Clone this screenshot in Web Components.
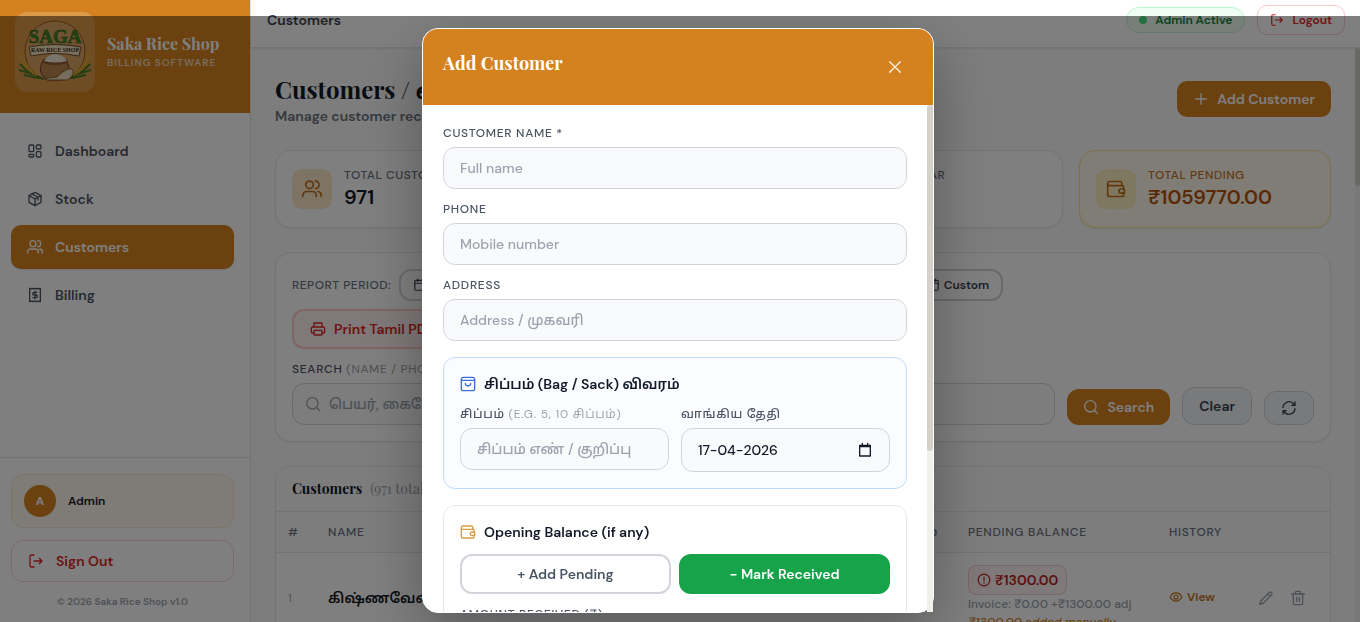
<!DOCTYPE html>
<html lang="en">
<head>
<meta charset="UTF-8">
<meta name="viewport" content="width=device-width, initial-scale=1.0">
<title>Saka Rice Shop</title>
<style>
  :root {
    --brand: #d4821f;
    --serif: "Playfair Display", "Liberation Serif", "Noto Sans Tamil", serif;
    --sans: "DM Sans", Inter, "Noto Sans Tamil", "Noto Sans", sans-serif;
  }
  html, body { height: 100%; }
  body {
    margin: 0;
    overflow: hidden;
    font-family: var(--sans);
    font-size: 14px;
    line-height: 20px;
    color: #111827;
  }
</style>
</head>
<body>
<shop-app></shop-app>

<script>
const ICONS = {
  dashboard: '<rect x="3" y="3" width="7" height="10" rx="1.5"/><rect x="14" y="3" width="7" height="6" rx="1.5"/><rect x="3" y="17" width="7" height="4" rx="1"/><rect x="14" y="13" width="7" height="8" rx="1.5"/>',
  box: '<path d="M12 2 21 7v10l-9 5-9-5V7z"/><path d="m3 7 9 5 9-5M12 12v10M7.500 4.500l9 5v4"/>',
  users: '<circle cx="9" cy="7" r="4.500"/><path d="M1 21v-1.500a4.500 4.500 0 0 1 4.500-4.500h7a4.500 4.500 0 0 1 4.500 4.500V21M16 2.500a4.500 4.500 0 0 1 0 9M19 15a4.500 4.500 0 0 1 4 4.500V21"/>',
  bill: '<path d="M4 2h1.500l1.500 1 1.700-1 1.600 1L12 2l1.700 1 1.600-1L17 3l1.500-1H20v20h-1.500L17 21l-1.700 1-1.600-1-1.700 1-1.700-1-1.600 1L7 21l-1.500 1H4z"/><path d="M15 8h-4.500a2 2 0 0 0 0 4h3a2 2 0 0 1 0 4H9M12 6.500v11"/>',
  logout: '<path d="M9 3H5a2 2 0 0 0-2 2v14a2 2 0 0 0 2 2h4M9 12h12M17 8l4 4-4 4"/>',
  plus: '<path d="M12 4v16M4 12h16"/>',
  close: '<path d="M4 4l16 16M20 4 4 20"/>',
  wallet: '<path d="M19 8V5a2 2 0 0 0-2-2H4.500a2.500 2.500 0 0 0 0 5H20a1 1 0 0 1 1 1v3M2 5.500V19a2 2 0 0 0 2 2h16a1 1 0 0 0 1-1v-3"/><path d="M22 12h-4a2.500 2.500 0 0 0 0 5h4z"/>',
  calendar: '<rect x="3" y="4" width="18" height="17" rx="2"/><path d="M8 2v4M16 2v4M3 9h18"/>',
  print: '<path d="M6 9V3h12v6M6 18H4a2 2 0 0 1-2-2v-5a2 2 0 0 1 2-2h16a2 2 0 0 1 2 2v5a2 2 0 0 1-2 2h-2"/><rect x="6" y="14" width="12" height="7" rx="1"/>',
  search: '<circle cx="11" cy="11" r="8.500"/><path d="m17.500 17.500 4.500 4.500"/>',
  refresh: '<path d="M3 11a9 9 0 0 1 16-5l2 2M21 3v5h-5M21 13a9 9 0 0 1-16 5l-2-2M3 21v-5h5"/>',
  alert: '<circle cx="12" cy="12" r="10"/><path d="M12 7v6M12 16v1"/>',
  eye: '<path d="M2 12c2-4.500 6-7 10-7s8 2.500 10 7c-2 4.500-6 7-10 7s-8-2.500-10-7z"/><circle cx="12" cy="12" r="3.500"/>',
  pencil: '<path d="M17 3.500a2.500 2.500 0 0 1 3.500 3.500L8 19.500 2.500 21.500l2-5.500zM14.500 6l3.500 3.500"/>',
  trash: '<path d="M2.500 6h19M8 6V4a2 2 0 0 1 2-2h4a2 2 0 0 1 2 2v2M5 6v14a2 2 0 0 0 2 2h10a2 2 0 0 0 2-2V6M10 11v6M14 11v6"/>',
  bag: '<rect x="2" y="2" width="20" height="20" rx="3"/><path d="M2 6.500h20M8 11a4 4 0 0 0 8 0"/>',
  datepick: '<path d="M4 5h16v16H4zM4 7h16M8 2v3M16 2v3"/>',
};

class UiIcon extends HTMLElement {
  constructor() {
    super();
    this.attachShadow({ mode: "open" });
  }

  connectedCallback() {
    const size = this.getAttribute("size") || 16;
    this.shadowRoot.innerHTML = `
      <style>
        :host { display: inline-flex; flex: none; }
        svg { display: block; fill: none; stroke: currentColor; stroke-linecap: round; stroke-linejoin: round; }
      </style>
      <svg width="${size}" height="${size}" viewBox="0 0 24 24" stroke-width="${this.getAttribute("stroke") || 2}" aria-hidden="true">${ICONS[this.getAttribute("name")]}</svg>
    `;
  }
}
customElements.define("ui-icon", UiIcon);

class ShopLogo extends HTMLElement {
  constructor() {
    super();
    this.attachShadow({ mode: "open" }).innerHTML = `
      <style>
        :host { display: block; flex: none; width: 80px; height: 80px; border-radius: 12px; background: rgba(255, 255, 255, 0.2); }
        svg { display: block; }
        text { font-family: "Liberation Serif", serif; font-weight: 700; }
      </style>
      <svg width="80" height="80" viewBox="0 0 80 80" role="img" aria-label="Saga raw rice shop">
        <circle cx="40" cy="39" r="30" fill="#dda565" stroke="#9a5a22" stroke-width="1"/>
        <g fill="none" stroke="#4c7a27" stroke-width="2">
          <path d="M5 52q10 11 24 15M75 52q-10 11-24 15M4 58q10 3 16 5M76 58q-10 3-16 5M9 63l14 3M71 63l-14 3"/>
        </g>
        <g fill="none" stroke="#e0a92e" stroke-width="4" stroke-dasharray="2 1">
          <path d="M6 40q1 15 17 23M74 40q-1 15-17 23"/>
        </g>
        <path d="M27 50q-5 12 5 17h17q9-5 3-17z" fill="#bd8550" stroke="#6d4020"/>
        <ellipse cx="40" cy="49" rx="13" ry="4" fill="#8a5a30"/>
        <path d="M29 49q3-5 7-6 4-3 8 0 5 1 8 6-11 3-23 0z" fill="#f4ead8"/>
        <path d="M42 65q10-10 15-8 4 4-4 11H32q-4-2 10-3z" fill="#ecd9bb" stroke="#8a5a30"/>
        <path d="M14 35q26-5 52 0l-2 9q-24-5-48 0z" fill="#f3e2bf" stroke="#6d4a25" stroke-width="1"/>
        <text x="40" y="31" text-anchor="middle" font-size="19" fill="#3f8a1f" stroke="#2a5c16" stroke-width="0.500">SAGA</text>
        <text x="40" y="40" text-anchor="middle" font-size="6" fill="#3b2a18">RAW RICE SHOP</text>
      </svg>
    `;
  }
}
customElements.define("shop-logo", ShopLogo);

class NavItem extends HTMLElement {
  constructor() {
    super();
    this.attachShadow({ mode: "open" });
  }

  connectedCallback() {
    this.shadowRoot.innerHTML = `
      <style>
        :host { display: block; }
        a {
          display: flex; align-items: center; gap: 12px; height: 44px; padding: 0 16px;
          border-radius: 10px; color: #4b5563; font-weight: 600; text-decoration: none;
        }
        :host([active]) a { background: var(--brand); color: #fff; box-shadow: 0 1px 2px rgba(0, 0, 0, 0.1); }
      </style>
      <a href="#"><ui-icon name="${this.getAttribute("icon")}"></ui-icon><slot></slot></a>
    `;
  }
}
customElements.define("nav-item", NavItem);

class AppSidebar extends HTMLElement {
  constructor() {
    super();
    this.attachShadow({ mode: "open" }).innerHTML = `
      <style>
        :host { display: flex; flex-direction: column; flex: none; box-sizing: border-box; width: 251px; background: #fff; border-right: 1px solid #e5e7eb; }
        header { display: flex; align-items: center; gap: 12px; padding: 12px 15px 21px; background: var(--brand); color: #fff; }
        h2 { margin: 0; font: 700 16px/22px var(--serif); }
        header p { margin: 0; font-size: 10px; line-height: 16px; font-weight: 600; letter-spacing: 1px; opacity: 0.7; }
        nav { flex: 1; display: flex; flex-direction: column; gap: 4px; padding: 16px 16px 0 11px; }
        footer { display: flex; flex-direction: column; gap: 12px; padding: 16px 16px 12px 11px; border-top: 1px solid #e5e7eb; }
        .user { display: flex; align-items: center; gap: 12px; padding: 10px 12px; border: 1px solid #fbe9cf; border-radius: 12px; background: #fef7ec; font-size: 12px; font-weight: 600; }
        .avatar { display: grid; place-items: center; width: 32px; height: 32px; border-radius: 50%; background: var(--brand); color: #fff; font-size: 12px; font-weight: 700; }
        button { display: flex; align-items: center; gap: 12px; height: 42px; padding: 0 16px; border: 1px solid #fbd5d9; border-radius: 12px; background: #fff; color: #dc2626; font: 600 14px/20px var(--sans); }
        small { font-size: 10px; line-height: 16px; font-weight: 600; text-align: center; color: #9ca3af; }
      </style>
      <header>
        <shop-logo></shop-logo>
        <div>
          <h2>Saka Rice Shop</h2>
          <p>BILLING SOFTWARE</p>
        </div>
      </header>
      <nav>
        <nav-item icon="dashboard">Dashboard</nav-item>
        <nav-item icon="box">Stock</nav-item>
        <nav-item icon="users" active>Customers</nav-item>
        <nav-item icon="bill">Billing</nav-item>
      </nav>
      <footer>
        <div class="user"><span class="avatar">A</span>Admin</div>
        <button type="button"><ui-icon name="logout"></ui-icon>Sign Out</button>
        <small>© 2026 Saka Rice Shop v1.0</small>
      </footer>
    `;
  }
}
customElements.define("app-sidebar", AppSidebar);

class TopBar extends HTMLElement {
  constructor() {
    super();
    this.attachShadow({ mode: "open" }).innerHTML = `
      <style>
        :host { display: flex; align-items: center; gap: 12px; padding: 5px 15px 12px 16px; background: #fff; border-bottom: 1px solid #e5e7eb; box-shadow: 0 1px 2px rgba(0, 0, 0, 0.08); color: #374151; font-weight: 600; }
        .title { flex: 1; }
        .status { display: flex; align-items: center; gap: 8px; height: 24px; padding: 0 12px; border: 1px solid #bbf7d0; border-radius: 13px; background: #f0fdf4; color: #15803d; font-size: 12px; font-weight: 600; }
        .dot { width: 8px; height: 8px; border-radius: 50%; background: #4ade80; }
        button { display: flex; align-items: center; gap: 8px; height: 30px; padding: 0 12px; border: 1px solid #fecaca; border-radius: 10px; background: #fff; color: #dc2626; font: 600 12px/16px var(--sans); }
      </style>
      <span class="title">Customers</span>
      <span class="status"><i class="dot"></i>Admin Active</span>
      <button type="button"><ui-icon name="logout" size="14"></ui-icon>Logout</button>
    `;
  }
}
customElements.define("top-bar", TopBar);

class StatCard extends HTMLElement {
  constructor() {
    super();
    this.attachShadow({ mode: "open" });
  }

  connectedCallback() {
    this.shadowRoot.innerHTML = `
      <style>
        :host { display: flex; align-items: center; gap: 12px; padding: 16px; border: 1px solid #e5e7eb; border-radius: 16px; background: #fff; box-shadow: 0 1px 2px rgba(0, 0, 0, 0.06); }
        .icon { display: grid; place-items: center; flex: none; width: 40px; height: 40px; border-radius: 10px; background: #fbe8c9; color: #c2701a; }
        p { margin: 0; color: #6b7280; font-size: 12px; line-height: 16px; font-weight: 500; letter-spacing: 0.5px; white-space: nowrap; }
        strong { display: block; font-size: 20px; line-height: 28px; font-weight: 600; }
        :host([warn]) { background: #fffaeb; border-color: #fde08a; }
        :host([warn]) .icon { background: #fef0c0; }
        :host([warn]) p { color: #c8741b; }
        :host([warn]) strong { color: #b45309; }
      </style>
      <span class="icon"><ui-icon name="${this.getAttribute("icon")}" size="20"></ui-icon></span>
      <div><p>${this.getAttribute("label")}</p><strong><slot></slot></strong></div>
    `;
  }
}
customElements.define("stat-card", StatCard);

class FilterPanel extends HTMLElement {
  constructor() {
    super();
    this.attachShadow({ mode: "open" }).innerHTML = `
      <style>
        :host { display: flex; flex-direction: column; padding: 16px; border: 1px solid #e5e7eb; border-radius: 16px; background: #fff; box-shadow: 0 1px 2px rgba(0, 0, 0, 0.06); }
        button { display: flex; align-items: center; gap: 8px; box-sizing: border-box; font: 600 14px/20px var(--sans); border-radius: 12px; }
        .period { display: flex; align-items: center; gap: 8px; }
        .period span { font-size: 12px; font-weight: 500; letter-spacing: 0.5px; color: #6b7280; white-space: nowrap; }
        .choices { display: flex; justify-content: space-between; flex: 0 1 604px; }
        .choices button { height: 32px; padding: 0 12px; gap: 4px; border: 2px solid #d1d5db; background: #fff; color: #374151; font-size: 12px; }
        .print { align-self: flex-start; height: 40px; margin: 8px 0 12px; padding: 0 16px; border: 2px solid #fecaca; background: #fef2f2; color: #dc2626; }
        label { margin-bottom: 6px; font-size: 12px; line-height: 16px; font-weight: 500; color: #4b5563; letter-spacing: 0.7px; }
        label span { color: #9ca3af; font-weight: 400; }
        .row { display: flex; align-items: flex-end; gap: 12px; }
        .box { display: flex; align-items: center; gap: 8px; flex: 1; box-sizing: border-box; height: 42px; padding: 0 12px; border: 1px solid #d1d5db; border-radius: 12px; background: #f8faf9; color: #9ca3af; }
        input { flex: 1; min-width: 0; padding: 0; border: 0; outline: 0; background: none; font: 500 14px/20px var(--sans); }
        input::placeholder { color: #9ca3af; }
        .go { height: 36px; padding: 0 16px; border: 0; background: var(--brand); color: #fff; }
        .clear, .reload { border: 1px solid #d1d5db; background: #f3f4f6; color: #374151; padding: 0 16px; }
        .clear { height: 38px; }
        .reload { height: 34px; }
      </style>
      <div class="period">
        <span>REPORT PERIOD:</span>
        <div class="choices">
          <button type="button"><ui-icon name="calendar" size="14"></ui-icon>This Week</button>
          <button type="button"><ui-icon name="calendar" size="14"></ui-icon>This Month</button>
          <button type="button"><ui-icon name="calendar" size="14"></ui-icon>Custom</button>
        </div>
      </div>
      <button class="print" type="button"><ui-icon name="print"></ui-icon>Print Tamil PDF</button>
      <label for="q">SEARCH <span>(NAME / PHONE)</span></label>
      <div class="row">
        <div class="box"><ui-icon name="search"></ui-icon><input id="q" type="text" placeholder="பெயர், கைபேசி"></div>
        <button class="go" type="button"><ui-icon name="search"></ui-icon>Search</button>
        <button class="clear" type="button">Clear</button>
        <button class="reload" type="button" aria-label="Refresh"><ui-icon name="refresh"></ui-icon></button>
      </div>
    `;
  }
}
customElements.define("filter-panel", FilterPanel);

class CustomerTable extends HTMLElement {
  constructor() {
    super();
    this.attachShadow({ mode: "open" }).innerHTML = `
      <style>
        :host { display: block; border: 1px solid #e5e7eb; border-radius: 16px; background: #fff; overflow: hidden; }
        .head { display: flex; align-items: center; gap: 8px; height: 44px; padding: 0 16px; background: #f8faf9; border-bottom: 1px solid #e5e7eb; font-family: var(--serif); }
        h3 { margin: 0; font-size: 14px; font-weight: 700; }
        .head span { color: #9ca3af; }
        table { width: 100%; border-collapse: collapse; table-layout: fixed; }
        th { height: 40px; padding: 0 12px; background: #f8faf9; border-bottom: 1px solid #e5e7eb; color: #6b7280; font-size: 12px; font-weight: 500; letter-spacing: 0.7px; text-align: left; white-space: nowrap; }
        th.sack { text-align: right; padding-right: 18px; }
        td { padding: 12px; white-space: nowrap; }
        td.num { color: #9ca3af; font-size: 12px; }
        td.name { font-weight: 600; }
        .due { display: inline-flex; align-items: center; gap: 4px; height: 28px; padding: 0 8px; border: 1px solid #fecaca; border-radius: 8px; background: #fef2f2; color: #b91c1c; font-weight: 600; vertical-align: top; }
        .note { font-size: 12px; line-height: 18px; font-weight: 500; color: #9ca3af; }
        .note em { color: #d4821f; }
        .view { display: inline-flex; align-items: center; gap: 4px; color: #c2701a; font-size: 12px; font-weight: 600; text-decoration: none; }
        .tools { display: flex; gap: 16px; }
        .tools button { display: flex; padding: 0; border: 0; background: none; color: #9ca3af; }
      </style>
      <div class="head"><h3>Customers</h3><span>(971 total)</span></div>
      <table>
        <colgroup><col style="width:40px"><col style="width:240px"><col><col style="width:201px"><col style="width:89px"><col style="width:84px"></colgroup>
        <thead>
          <tr><th>#</th><th>NAME</th><th class="sack">சிப்பம்</th><th>PENDING BALANCE</th><th>HISTORY</th><th></th></tr>
        </thead>
        <tbody>
          <tr>
            <td class="num">1</td>
            <td class="name">கிஷ்ணவேணி</td>
            <td></td>
            <td>
              <span class="due"><ui-icon name="alert" size="14"></ui-icon>₹1300.00</span>
              <div class="note">Invoice: ₹0.00 +₹1300.00 adj<br><em>₹1300.00 added manually</em></div>
            </td>
            <td><a class="view" href="#"><ui-icon name="eye" size="14"></ui-icon>View</a></td>
            <td>
              <div class="tools">
                <button type="button" aria-label="Edit"><ui-icon name="pencil"></ui-icon></button>
                <button type="button" aria-label="Delete"><ui-icon name="trash"></ui-icon></button>
              </div>
            </td>
          </tr>
        </tbody>
      </table>
    `;
  }
}
customElements.define("customer-table", CustomerTable);

class CustomersPage extends HTMLElement {
  constructor() {
    super();
    this.attachShadow({ mode: "open" }).innerHTML = `
      <style>
        :host { display: flex; flex: 1; min-height: 0; background: #f8faf9; }
        main { flex: 1; min-width: 0; display: flex; flex-direction: column; gap: 24px; padding: 24px 24px 0; overflow: hidden; }
        main > * { flex: none; }
        .top { display: flex; align-items: center; justify-content: space-between; }
        h1 { margin: 0; font: 700 24px/34px var(--serif); }
        .top p { margin: 0; line-height: 20px; color: #6b7280; font-weight: 600; }
        .top button { display: flex; align-items: center; gap: 8px; height: 36px; padding: 0 16px; border: 0; border-radius: 10px; background: var(--brand); color: #fff; font: 600 14px/20px var(--sans); }
        .stats { display: grid; grid-template-columns: repeat(4, 1fr); gap: 16px; }
        .rail { flex: none; width: 5px; background: #f1f1ec; }
        .thumb { height: 138px; border-radius: 3px; background: #d3d1c9; }
      </style>
      <main>
        <div class="top">
          <div>
            <h1>Customers / வாடிக்கையாளர்</h1>
            <p>Manage customer records</p>
          </div>
          <button type="button"><ui-icon name="plus"></ui-icon>Add Customer</button>
        </div>
        <div class="stats">
          <stat-card icon="users" label="TOTAL CUSTOMERS">971</stat-card>
          <stat-card icon="calendar" label="THIS MONTH">0</stat-card>
          <stat-card icon="calendar" label="LAST YEAR">0</stat-card>
          <stat-card icon="wallet" label="TOTAL PENDING" warn>₹1059770.00</stat-card>
        </div>
        <filter-panel></filter-panel>
        <customer-table></customer-table>
      </main>
      <div class="rail"><div class="thumb"></div></div>
    `;
  }
}
customElements.define("customers-page", CustomersPage);

class FormField extends HTMLElement {
  constructor() {
    super();
    this.attachShadow({ mode: "open" });
  }

  connectedCallback() {
    const isDate = this.hasAttribute("date");
    this.shadowRoot.innerHTML = `
      <style>
        :host { display: block; min-width: 0; }
        label { display: block; height: 16px; margin-bottom: 6px; font-size: 12px; line-height: 16px; font-weight: 500; color: #4b5563; letter-spacing: 0.7px; white-space: nowrap; }
        .box { display: flex; align-items: center; box-sizing: border-box; height: 42px; padding: 0 16px; border: 1px solid #d1d5db; border-radius: 12px; background: #f9fafc; }
        :host([date]) .box { height: 44px; }
        input { flex: 1; min-width: 0; padding: 0; border: 0; outline: 0; background: none; color: #111827; font: 500 14px/20px var(--sans); }
        input::placeholder { color: #9ca3af; }
        ::slotted(span) { color: #9ca3af; font-weight: 400; }
      </style>
      <label for="field"><slot></slot></label>
      <div class="box">
        <input id="field" type="text" placeholder="${this.getAttribute("placeholder") || ""}" value="${this.getAttribute("value") || ""}">
        ${isDate ? '<ui-icon name="datepick"></ui-icon>' : ""}
      </div>
    `;
  }
}
customElements.define("form-field", FormField);

class CustomerDialog extends HTMLElement {
  constructor() {
    super();
    this.attachShadow({ mode: "open" }).innerHTML = `
      <style>
        :host { display: flex; flex-direction: column; box-sizing: border-box; width: 512px; max-width: 100%; border: 1px solid #fff; border-radius: 16px; background: #fff; box-shadow: 0 20px 60px rgba(0, 0, 0, 0.3); }
        header { display: flex; align-items: flex-start; justify-content: space-between; height: 76px; box-sizing: border-box; padding: 22px 30px 0 20px; border-radius: 15px 15px 0 0; background: var(--brand); color: #fff; }
        h2 { margin: 0; font: 700 18px/24px var(--serif); }
        header button { display: flex; margin-top: 8px; padding: 0; border: 0; background: none; color: #fbeeda; }
        .scroll { display: flex; flex: 1; min-height: 0; overflow: hidden; border-bottom-left-radius: 15px; }
        form { flex: 1; min-width: 0; display: flex; flex-direction: column; gap: 12px; padding: 20px 20px 0; overflow: hidden; }
        form > * { flex: none; }
        section { display: flex; flex-direction: column; gap: 12px; margin-top: 4px; padding: 16px; border: 1px solid #e5e7eb; border-radius: 12px; }
        .bag { border-color: #bfdbfe; background: #fafcff; }
        h3 { display: flex; align-items: center; gap: 8px; height: 20px; margin: 0; font-size: 14px; font-weight: 600; white-space: nowrap; }
        .bag h3 ui-icon { color: #3b6fe0; }
        .balance h3 ui-icon { color: #d99a3c; }
        .pair { display: grid; grid-template-columns: 1fr 1fr; gap: 12px; align-items: start; }
        .modes { display: grid; grid-template-columns: 1fr 1fr; gap: 8px; }
        .modes button { height: 40px; border: 2px solid #d1d5db; border-radius: 12px; background: #fff; color: #4b5563; font: 600 14px/20px var(--sans); }
        .modes .on { border-color: #16a34a; background: #16a34a; color: #fff; }
        .rail { flex: none; width: 6px; background: #f1f1ec; }
        .thumb { height: 346px; border-radius: 3px; background: #d3d1c9; }
      </style>
      <header>
        <h2 id="title">Add Customer</h2>
        <button type="button" aria-label="Close"><ui-icon name="close" stroke="2"></ui-icon></button>
      </header>
      <div class="scroll">
        <form aria-labelledby="title">
          <form-field placeholder="Full name">CUSTOMER NAME *</form-field>
          <form-field placeholder="Mobile number">PHONE</form-field>
          <form-field placeholder="Address / முகவரி">ADDRESS</form-field>
          <section class="bag">
            <h3><ui-icon name="bag"></ui-icon>சிப்பம் (Bag / Sack) விவரம்</h3>
            <div class="pair">
              <form-field placeholder="சிப்பம் எண் / குறிப்பு">சிப்பம் <span>(E.G. 5, 10 சிப்பம்)</span></form-field>
              <form-field date value="17-04-2026">வாங்கிய தேதி</form-field>
            </div>
          </section>
          <section class="balance">
            <h3><ui-icon name="wallet"></ui-icon>Opening Balance (if any)</h3>
            <div class="modes">
              <button type="button">+ Add Pending</button>
              <button type="button" class="on">− Mark Received</button>
            </div>
            <form-field>AMOUNT RECEIVED (₹)</form-field>
          </section>
        </form>
        <div class="rail"><div class="thumb"></div></div>
      </div>
    `;
  }
}
customElements.define("customer-dialog", CustomerDialog);

class ShopApp extends HTMLElement {
  constructor() {
    super();
    this.attachShadow({ mode: "open" }).innerHTML = `
      <style>
        :host { display: flex; height: 100vh; overflow: hidden; }
        .content { display: flex; flex-direction: column; flex: 1; min-width: 0; }
        top-bar { position: relative; }
        .overlay { position: fixed; inset: 16px 0 0; display: flex; justify-content: center; box-sizing: border-box; padding: 12px 16px 9px 12px; background: rgba(0, 0, 0, 0.5); overflow: hidden; }
      </style>
      <app-sidebar></app-sidebar>
      <div class="content">
        <top-bar></top-bar>
        <customers-page></customers-page>
      </div>
      <div class="overlay"><customer-dialog></customer-dialog></div>
    `;
  }
}
customElements.define("shop-app", ShopApp);
</script>
</body>
</html>
